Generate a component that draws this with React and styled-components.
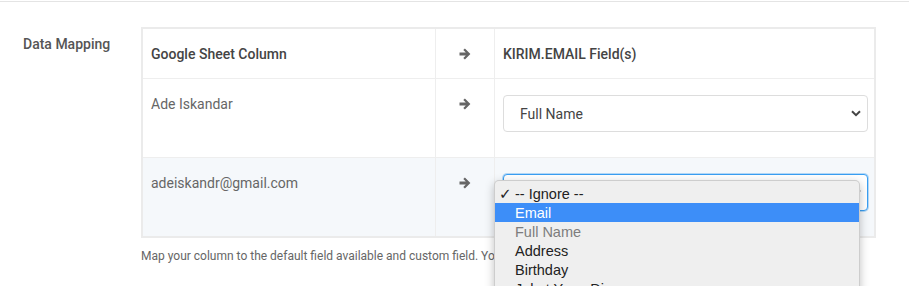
import React from "react";
import styled, { createGlobalStyle } from "styled-components";

const Global = createGlobalStyle`
  html, body { margin: 0; padding: 0; background: #fff; overflow: hidden; }
  body { font-family: Roboto, "Liberation Sans", sans-serif; color: #555; }
  * { box-sizing: border-box; }
`;

const Page = styled.div`
  padding-top: 1px;
  height: 286px;
`;

const Rule = styled.div`
  border-top: 1px solid #e4e4e4;
`;

const Section = styled.div`
  display: grid;
  grid-template-columns: 141px 735px;
  padding-top: 25px;
`;

const Label = styled.div`
  padding: 8px 0 0 23px;
  font-size: 14px;
  line-height: 18px;
  font-weight: 500;
  color: #555;
`;

const Content = styled.div`
  display: flex;
  flex-direction: column;
`;

const Table = styled.div`
  display: grid;
  grid-template-columns: 293px 59px 379px;
  border: 2px solid #ebebeb;
  width: 735px;
`;

const Cell = styled.div`
  background: ${(p) => (p.$shade ? "#f5f8fb" : "#fff")};
  border-bottom: ${(p) => (p.$last ? "none" : "1px solid #eeeeee")};
  border-right: ${(p) => (p.$divider ? "1px solid #eeeeee" : "none")};
  padding: ${(p) => (p.$head ? "16px 6px 15px 8px" : "16px 6px 25px 8px")};
  font-size: 14px;
  font-weight: ${(p) => (p.$head ? 500 : 400)};
  line-height: 18px;
  color: ${(p) => (p.$head ? "#444" : "#666")};
  position: relative;
`;

const ArrowCell = styled(Cell)`
  display: flex;
  justify-content: center;
  padding-left: 6px;
  padding-right: 6px;
  color: #666;
`;

const ArrowIcon = styled.svg`
  width: 12px;
  height: 12px;
  margin-top: 3px;
  fill: currentColor;
`;

const SelectBox = styled.div`
  height: 37px;
  border: 1px solid ${(p) => (p.$focused ? "#3a9ff2" : "#dddddd")};
  box-shadow: ${(p) => (p.$focused ? "0 0 0 1px rgba(58,159,242,0.35)" : "none")};
  border-radius: 4px;
  background: #fff;
  display: flex;
  align-items: center;
  justify-content: space-between;
  padding: 0 6px 0 16px;
  font-size: 14px;
  font-weight: 400;
  color: #444;
  position: relative;
`;

const Value = styled.span`
  visibility: ${(p) => (p.$hidden ? "hidden" : "visible")};
`;

const Chevron = styled.svg`
  width: 10px;
  height: 7px;
  fill: none;
  stroke: #444;
  stroke-width: 2;
`;

const Popup = styled.div`
  position: absolute;
  left: -10px;
  top: 5px;
  width: 366px;
  height: 160px;
  background: #efefef;
  border: 1px solid rgba(0, 0, 0, 0.14);
  border-radius: 5px;
  box-shadow: 0 3px 10px rgba(0, 0, 0, 0.25);
  padding-top: 3px;
  z-index: 10;
  font-family: "Liberation Sans", Arial, sans-serif;
  font-size: 14.5px;
`;

const Option = styled.div`
  display: flex;
  align-items: center;
  height: 19px;
  background: ${(p) => (p.$active ? "#3d8ef8" : "transparent")};
  color: ${(p) => (p.$active ? "#fff" : p.$disabled ? "#7d7d7d" : "#222")};
`;

const Check = styled.span`
  width: 20px;
  padding-left: 4px;
  font-family: "DejaVu Sans", sans-serif;
  font-size: 15px;
`;

const Help = styled.div`
  margin-top: 10px;
  font-size: 12px;
  line-height: 16px;
  color: #666;
`;

const Arrow = () => (
  <ArrowIcon viewBox="0 0 12 12">
    <path d="M0.5 4.6h6.3L4.3 2.1l1.6-1.6L11.4 6l-5.5 5.5-1.6-1.6 2.5-2.5H0.5z" />
  </ArrowIcon>
);

const ChevronDown = () => (
  <Chevron viewBox="0 0 10 7">
    <path d="M1 1.2l4 4 4-4" />
  </Chevron>
);

const options = [
  { label: "-- Ignore --", checked: true },
  { label: "Email", active: true },
  { label: "Full Name", disabled: true },
  { label: "Address" },
  { label: "Birthday" },
  { label: "Jakat Yang Dipegang" },
  { label: "Phone" },
];

export default function App() {
  return (
    <Page>
      <Global />
      <Rule />
      <Section>
        <Label>Data Mapping</Label>
        <Content>
          <Table>
            <Cell $head $divider>Google Sheet Column</Cell>
            <ArrowCell $head $divider><Arrow /></ArrowCell>
            <Cell $head>KIRIM.EMAIL Field(s)</Cell>

            <Cell $divider>Ade Iskandar</Cell>
            <ArrowCell $divider><Arrow /></ArrowCell>
            <Cell>
              <SelectBox>
                <Value>Full Name</Value>
                <ChevronDown />
              </SelectBox>
            </Cell>

            <Cell $divider $shade $last>adeiskandr@gmail.com</Cell>
            <ArrowCell $divider $shade $last><Arrow /></ArrowCell>
            <Cell $shade $last>
              <SelectBox $focused>
                <Value $hidden>-- Ignore --</Value>
                <ChevronDown />
                <Popup>
                  {options.map((o) => (
                    <Option key={o.label} $active={o.active} $disabled={o.disabled}>
                      <Check>{o.checked ? "✓" : ""}</Check>
                      <span>{o.label}</span>
                    </Option>
                  ))}
                </Popup>
              </SelectBox>
            </Cell>
          </Table>
          <Help>
            Map your column to the default field available and custom field. You can create new custom field.
          </Help>
        </Content>
      </Section>
    </Page>
  );
}
